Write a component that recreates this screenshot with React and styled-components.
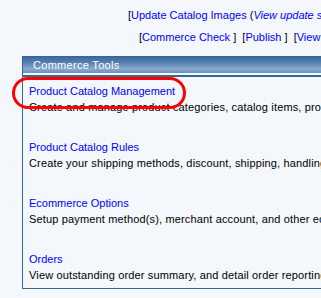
import styled, { createGlobalStyle } from "styled-components";

const GlobalStyle = createGlobalStyle`
  html, body {
    margin: 0;
    padding: 0;
    background: #f4f7fb;
    overflow: hidden;
  }
  body {
    font-family: "Liberation Sans", Arial, sans-serif;
    font-size: 11px;
    color: #000;
  }
`;

const Page = styled.div`
  width: 321px;
  height: 298px;
  overflow: hidden;
  position: relative;
  white-space: nowrap;
`;

const TopLinks = styled.div`
  display: flex;
  flex-direction: column;
  gap: 9px;
  padding-top: 9px;
  line-height: 13px;
`;

const LinkLine = styled.div`
  padding-left: ${(p) => p.indent}px;
`;

const Link = styled.a`
  color: #0000ff;
  text-decoration: none;
  cursor: pointer;
`;

const Note = styled.i`
  color: #0000ff;
`;

const Panel = styled.div`
  margin: 12px 0 0 22px;
  width: 400px;
  border: 1px solid #336699;
  background: #f4f7fb;
  padding-bottom: 6px;
`;

const PanelHeader = styled.div`
  height: 16px;
  line-height: 16px;
  padding-left: 10px;
  color: #ffffff;
  background: linear-gradient(
    to bottom,
    #3d6a9c 0%,
    #5682b2 35%,
    #89a9cc 75%,
    #6a92bc 100%
  );
  border-bottom: 2px solid #f4f7fb;
  box-shadow: 0 2px 0 #336699;
  letter-spacing: 0.3px;
`;

const ItemList = styled.div`
  display: flex;
  flex-direction: column;
  gap: 27px;
  padding: 10px 0 0 6px;
`;

const Item = styled.div`
  display: flex;
  flex-direction: column;
  gap: 3px;
  line-height: 13px;
`;

const Desc = styled.span`
  letter-spacing: 0.15px;
`;

const Highlight = styled.div`
  position: absolute;
  left: 12px;
  top: 77px;
  width: 168px;
  height: 26px;
  border: 3px solid #ff0000;
  border-radius: 16px;
  pointer-events: none;
`;

const items = [
  {
    title: "Product Catalog Management",
    desc: "Create and manage product categories, catalog items, product options",
  },
  {
    title: "Product Catalog Rules",
    desc: "Create your shipping methods, discount, shipping, handling rules",
  },
  {
    title: "Ecommerce Options",
    desc: "Setup payment method(s), merchant account, and other ecommerce options",
  },
  {
    title: "Orders",
    desc: "View outstanding order summary, and detail order reporting",
  },
];

export default function App() {
  return (
    <Page>
      <GlobalStyle />
      <TopLinks>
        <LinkLine indent={128}>
          [<Link>Update Catalog Images</Link> (<Note>View update status</Note>) ]
        </LinkLine>
        <LinkLine indent={139}>
          [<Link>Commerce Check</Link> ]&nbsp; [<Link>Publish</Link> ]&nbsp; [
          <Link>View Store</Link> ]
        </LinkLine>
      </TopLinks>
      <Panel>
        <PanelHeader>Commerce Tools</PanelHeader>
        <ItemList>
          {items.map((el, idx) => (
            <Item key={idx}>
              <Link>{el.title}</Link>
              <Desc>{el.desc}</Desc>
            </Item>
          ))}
        </ItemList>
      </Panel>
      <Highlight />
    </Page>
  );
}
